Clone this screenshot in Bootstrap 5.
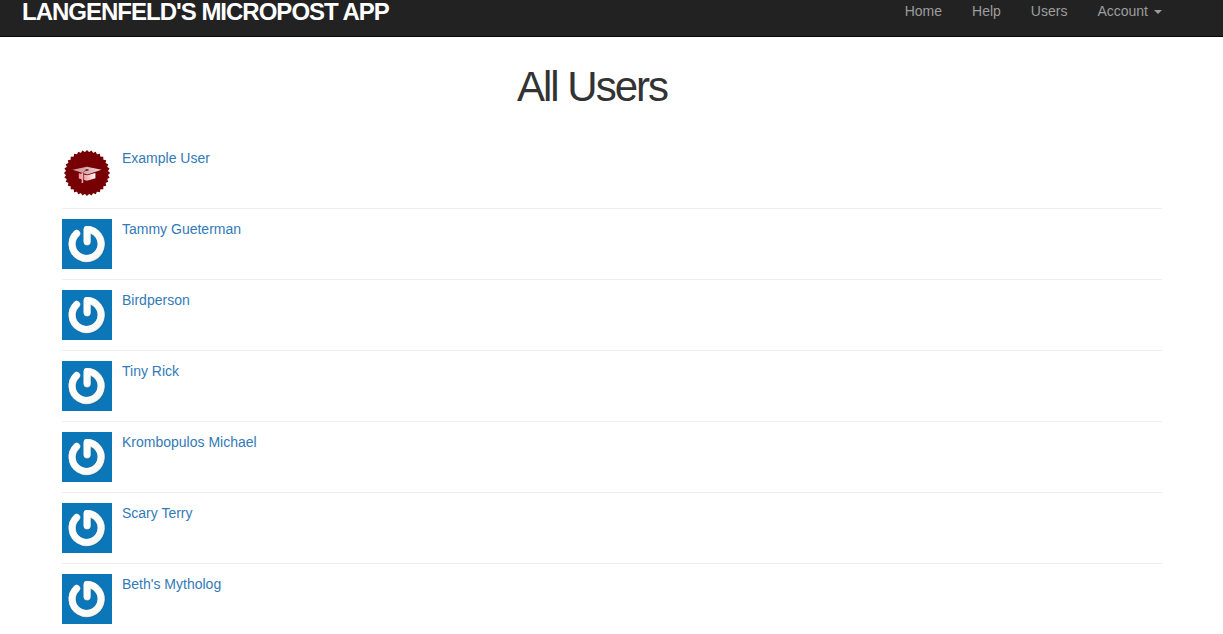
<!DOCTYPE html>
<html lang="en">
<head>
<meta charset="utf-8">
<meta name="viewport" content="width=device-width, initial-scale=1">
<title>All Users</title>
<link href="https://cdn.jsdelivr.net/npm/bootstrap@5.3.0/dist/css/bootstrap.min.css" rel="stylesheet">
<style>
  body { font-family: "Liberation Sans", Arial, sans-serif; font-size: 14px; line-height: 20px; color: #333; }
  .page-gutter { padding-left: 22px; padding-right: 61px; }
  .topbar { background: #222; border-bottom: 1px solid #080808; }
  .topbar .navbar-brand { font-size: 24px; line-height: 24px; font-weight: 700; letter-spacing: -1px; color: #fff; }
  .topbar .nav-link, .topbar .nav-link:hover { color: #9d9d9d; }
  .topbar .nav-links { gap: 30px; padding-top: 1px; }
  .topbar .dropdown-toggle::after { border-width: 4px 4px 0; margin-left: 6px; vertical-align: 2px; }
  .page-title { font-size: 42px; line-height: 46px; letter-spacing: -2px; margin: 27px 0 28px; }
  .users { padding-left: 40px; }
  .users li { padding: 10px 0; border-bottom: 1px solid #eee; gap: 10px; }
  .users a { color: #337ab7; text-decoration: none; }
  .users a:hover { text-decoration: underline; }
  .avatar { width: 50px; height: 50px; flex: none; }
</style>
</head>
<body>
<svg width="0" height="0" class="position-absolute" aria-hidden="true">
  <defs>
    <linearGradient id="bevel" x1="0" y1="0" x2="1" y2="1">
      <stop offset="0" stop-color="#fff"/><stop offset=".65" stop-color="#fdfdfb"/><stop offset="1" stop-color="#f4f4ef"/>
    </linearGradient>
    <linearGradient id="capTop" x1="0" x2="1">
      <stop offset="0" stop-color="#c78e93"/><stop offset=".45" stop-color="#d8abb0"/><stop offset="1" stop-color="#efd9dd"/>
    </linearGradient>
    <linearGradient id="capBase" x1="0" x2="1">
      <stop offset="0" stop-color="#ee9a9d"/><stop offset=".5" stop-color="#f3b3b6"/><stop offset="1" stop-color="#fff"/>
    </linearGradient>
    <rect id="tooth" x="8.7" y="8.7" width="32.6" height="32.6"/>
    <symbol id="power" viewBox="0 0 50 50">
      <rect width="50" height="50" fill="#0b76b8"/>
      <g fill="none" stroke-linecap="round" stroke-linejoin="round">
        <path d="M14.7 14.6A14.5 14.5 0 1 0 25.2 10.6V22.8" stroke="#075c91" stroke-width="7.2" opacity=".4" transform="translate(.5 .8)"/>
        <path d="M14.7 14.6A14.5 14.5 0 1 0 25.2 10.6V22.8" stroke="#cfd3d1" stroke-width="7.2"/>
        <path d="M14.5 14.3A14.5 14.5 0 1 0 25 10.3V22.5" stroke="url(#bevel)" stroke-width="6.6"/>
      </g>
    </symbol>
    <symbol id="seal" viewBox="0 0 50 50">
      <g fill="#760003">
        <use href="#tooth"/>
        <use href="#tooth" transform="rotate(11.25 25 25)"/>
        <use href="#tooth" transform="rotate(22.5 25 25)"/>
        <use href="#tooth" transform="rotate(33.75 25 25)"/>
        <use href="#tooth" transform="rotate(45 25 25)"/>
        <use href="#tooth" transform="rotate(56.25 25 25)"/>
        <use href="#tooth" transform="rotate(67.5 25 25)"/>
        <use href="#tooth" transform="rotate(78.75 25 25)"/>
      </g>
      <path d="M16.8 25.2L25 27L33.4 25V30.2L25 32.8L16.8 30.4Z" fill="url(#capBase)"/>
      <path d="M10.5 21.8L25 18.8L39.5 21.8L25.4 27.2L22 26.2Z" fill="#760003"/>
      <path d="M10.5 21.8L25 18.8L39.5 21.8L25.4 26.6Z" fill="url(#capTop)"/>
      <path d="M25 22C22 22.8 21 24 20.8 26" fill="none" stroke="#8f2a30" stroke-width=".7"/>
      <ellipse cx="25" cy="22" rx="1.8" ry=".7" fill="#760003"/>
      <path d="M21.6 26V34" stroke="#760003" stroke-width=".8"/>
      <path d="M20.4 25V35" stroke="#e3b4b8" stroke-width="1.5"/>
    </symbol>
  </defs>
</svg>

<header class="topbar">
  <nav class="page-gutter d-flex justify-content-between align-items-start" aria-label="Main">
    <a class="navbar-brand text-uppercase p-0 pb-2 mb-1 me-3" href="#">Langenfeld's Micropost App</a>
    <ul class="nav nav-links flex-nowrap">
      <li class="nav-item"><a class="nav-link p-0" href="#">Home</a></li>
      <li class="nav-item"><a class="nav-link p-0" href="#">Help</a></li>
      <li class="nav-item"><a class="nav-link p-0" href="#">Users</a></li>
      <li class="nav-item dropdown">
        <a class="nav-link dropdown-toggle p-0" href="#" role="button" data-bs-toggle="dropdown" aria-expanded="false">Account</a>
      </li>
    </ul>
  </nav>
</header>

<main class="page-gutter">
  <h1 class="page-title text-center fw-normal">All Users</h1>
  <ul class="users list-unstyled mb-0">
    <li class="d-flex align-items-start"><svg class="avatar" role="img" aria-label="Avatar"><use href="#seal"/></svg><a href="#">Example User</a></li>
    <li class="d-flex align-items-start"><svg class="avatar" role="img" aria-label="Avatar"><use href="#power"/></svg><a href="#">Tammy Gueterman</a></li>
    <li class="d-flex align-items-start"><svg class="avatar" role="img" aria-label="Avatar"><use href="#power"/></svg><a href="#">Birdperson</a></li>
    <li class="d-flex align-items-start"><svg class="avatar" role="img" aria-label="Avatar"><use href="#power"/></svg><a href="#">Tiny Rick</a></li>
    <li class="d-flex align-items-start"><svg class="avatar" role="img" aria-label="Avatar"><use href="#power"/></svg><a href="#">Krombopulos Michael</a></li>
    <li class="d-flex align-items-start"><svg class="avatar" role="img" aria-label="Avatar"><use href="#power"/></svg><a href="#">Scary Terry</a></li>
    <li class="d-flex align-items-start border-0 pb-0"><svg class="avatar" role="img" aria-label="Avatar"><use href="#power"/></svg><a href="#">Beth's Mytholog</a></li>
  </ul>
</main>
<script src="https://cdn.jsdelivr.net/npm/bootstrap@5.3.0/dist/js/bootstrap.bundle.min.js"></script>
</body>
</html>
